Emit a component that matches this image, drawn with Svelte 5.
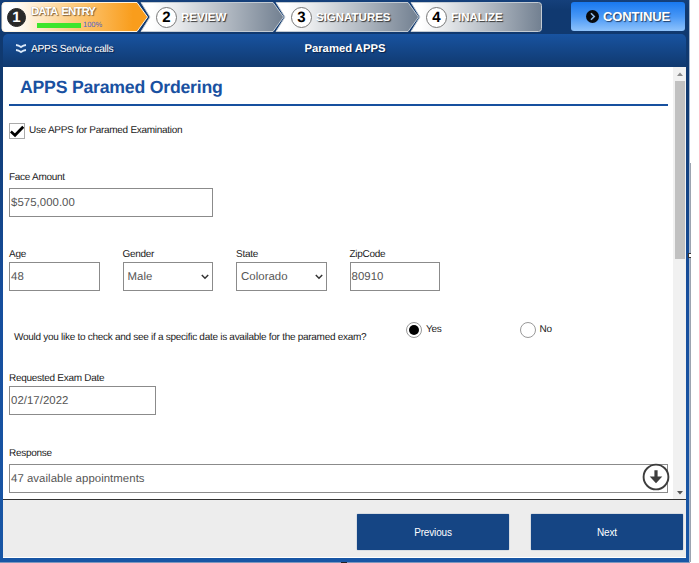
<script>
  const steps = [
    { n: 1, label: 'DATA ENTRY', width: 147, left: 0, shape: 'M4 .5H136L146.500 15L136 29.500H4Q1 29.500 1 26.500V3.500Q1 .5 4 .5Z', active: true },
    { n: 2, label: 'REVIEW', width: 145, left: -8, shape: 'M1 .5H133L143.500 15L133 29.500H1L10 15Z' },
    { n: 3, label: 'SIGNATURES', width: 145, left: -10, shape: 'M1 .5H133L143.500 15L133 29.500H1L10 15Z' },
    { n: 4, label: 'FINALIZE', width: 132, left: -10, shape: 'M1 .5H128.500Q131.500 .5 131.500 3.500V26.500Q131.500 29.500 128.500 29.500H1L10 15Z' },
  ];
  const person = [
    { label: 'Age', value: '48' },
    { label: 'Gender', value: 'Male', select: true },
    { label: 'State', value: 'Colorado', select: true },
    { label: 'ZipCode', value: '80910' },
  ];
</script>

<div class="page">
  <main class="window">
    <header class="top">
      {#each steps as step}
        <div class="step" class:active={step.active} style="width:{step.width}px;margin-left:{step.left}px">
          <svg class="shape" width={step.width} height="30">
            <defs>
              <linearGradient id="fill{step.n}">
                <stop offset="0.08" stop-color="#fff" />
                {#if step.active}
                  <stop offset="0.5" stop-color="#fdca7c" />
                  <stop offset="0.9" stop-color="#f99d1c" />
                {:else}
                  <stop offset="0.25" stop-color="#e9ebed" />
                  <stop offset="1" stop-color="#728091" />
                {/if}
              </linearGradient>
            </defs>
            <path d={step.shape} fill="url(#fill{step.n})" stroke={step.active ? '#fff3df' : '#c3cbd3'} />
          </svg>
          <span class="num">{step.n}</span>
          <div class="caption">
            <b>{step.label}</b>
            {#if step.active}
              <div class="progress"><i></i><span>100%</span></div>
            {/if}
          </div>
        </div>
      {/each}
      <button class="continue">
        <svg width="13" height="13" viewBox="0 0 12 12">
          <circle cx="6" cy="6" r="6" fill="#080a0d" />
          <path d="M4.600 3L7.600 6L4.600 9" fill="none" stroke="#8db9e8" stroke-width="1.500" />
        </svg>
        <b>CONTINUE</b>
      </button>
    </header>

    <nav class="bar">
      <div class="calls">
        <svg width="12" height="10" viewBox="0 0 12 10">
          <path d="M1 1Q3.500 1.200 6 3Q8.500 1.200 11 1M1 6Q3.500 6.200 6 8Q8.500 6.200 11 6" fill="none" stroke="#dbe9fa" stroke-width="1.900" />
        </svg>
        <span>APPS Service calls</span>
      </div>
      <b class="title">Paramed APPS</b>
    </nav>

    <section class="body">
      <div class="form">
        <h1>APPS Paramed Ordering</h1>
        <div class="use">
          <span class="check">
            <svg width="14" height="14" viewBox="0 0 14 14"><path d="M.8 7.500L5 11.300L13.200 2.800" fill="none" stroke="#000" stroke-width="2.700" /></svg>
          </span>
          <span class="t use-text">Use APPS for Paramed Examination</span>
        </div>
        <div class="field face">
          <span class="t">Face Amount</span>
          <div class="input">$575,000.00</div>
        </div>
        <div class="row">
          {#each person as f}
            <div class="field">
              <span class="t">{f.label}</span>
              <div class="input" class:select={f.select}>
                {f.value}
                {#if f.select}
                  <svg width="8" height="6" viewBox="0 0 8 6"><path d="M.8 1L4 4.200L7.200 1" fill="none" stroke="#333" stroke-width="1.500" /></svg>
                {/if}
              </div>
            </div>
          {/each}
        </div>
        <div class="question">
          <span class="t ask">Would you like to check and see if a specific date is available for the paramed exam?</span>
          <div class="radio"><span class="dot on"></span><span class="t">Yes</span></div>
          <div class="radio"><span class="dot"></span><span class="t">No</span></div>
        </div>
        <div class="field date">
          <span class="t">Requested Exam Date</span>
          <div class="input">02/17/2022</div>
        </div>
        <div class="field response">
          <span class="t">Response</span>
          <div class="input">
            47 available appointments
            <svg class="down" width="28" height="28" viewBox="0 0 28 28">
              <circle cx="14" cy="14" r="12.400" fill="#fff" stroke="#3d3d3d" stroke-width="1.900" />
              <path d="M12.400 7.300H15.600V13.500H20.300L14 20.200L7.700 13.500H12.400Z" fill="#3d3d3d" />
            </svg>
          </div>
        </div>
      </div>
      <div class="scroll">
        <svg width="6" height="4"><path d="M0 4L3 .5L6 4Z" fill="#8b8b8b" /></svg>
        <div class="thumb"></div>
        <svg width="6" height="4"><path d="M0 0L3 3.500L6 0Z" fill="#555" /></svg>
      </div>
    </section>

    <footer>
      <button>Previous</button>
      <button>Next</button>
    </footer>
    <i class="fragment"></i>
  </main>
  <div class="outside"><i></i><b></b></div>
</div>

<style>
  .page {
    display: flex;
    width: 699px;
    height: 563px;
    overflow: hidden;
    background: #fff;
    font-family: "Liberation Sans", Arial, sans-serif;
    text-rendering: geometricPrecision;
  }
  .window {
    position: relative;
    box-sizing: border-box;
    width: 690px;
    height: 563px;
    padding: 0 3px;
    display: flex;
    flex-direction: column;
    background: linear-gradient(#15407b 0, #103970 10px, #10396f 90px, #164e9d 300px, #1856a5);
    border-right: 1px solid #aab9ce;
    border-bottom: 1px solid #7d96bd;
  }
  .top {
    display: flex;
    height: 34px;
    box-sizing: border-box;
    padding-top: 2px;
    margin-left: -2px;
    flex: none;
  }
  .step {
    position: relative;
    height: 30px;
    display: flex;
    align-items: center;
    flex: none;
  }
  .shape { position: absolute; left: 0; top: 0; }
  .num {
    position: relative;
    box-sizing: border-box;
    width: 21px;
    height: 21px;
    margin-left: 16px;
    border: 1.500px solid #777;
    border-radius: 50%;
    background: #fff;
    color: #000;
    font: bold 15px/19px "Liberation Sans", sans-serif;
    text-align: center;
  }
  .active .num {
    width: 19px;
    height: 19px;
    margin-left: 6px;
    border-color: #292929;
    background: #292929;
    color: #fff;
    line-height: 17px;
  }
  .caption { position: relative; margin-left: 4px; }
  .caption b {
    display: block;
    margin-top: 2px;
    color: #fff;
    font-size: 11.500px;
    line-height: 13px;
    letter-spacing: 0;
    text-shadow: 1px 1px 1px #333;
    white-space: nowrap;
  }
  .active .caption { margin-left: 5px; }
  .active .caption b {
    margin-top: -1px;
    font-size: 11.500px;
    letter-spacing: -.95px;
    word-spacing: 2px;
    text-shadow: 1px 1px 1px #85643a, 0 0 1px #9a7a50;
  }
  .progress { display: flex; align-items: center; height: 8px; margin: 2px 0 -2px 6px; }
  .progress i { width: 44px; height: 5px; background: #3de52c; }
  .progress span { margin-left: 2px; font-size: 7.500px; line-height: 8px; color: #5265c7; }
  .continue {
    width: 114px;
    height: 29px;
    margin-left: 29px;
    padding: 0;
    border: 0;
    border-radius: 3px;
    display: flex;
    align-items: center;
    justify-content: center;
    gap: 4px;
    background: linear-gradient(#1878ef, #4897f6 50%, #8fc3fb);
    color: #fff;
    font: 13px "Liberation Sans", sans-serif;
    flex: none;
  }
  .continue b { text-shadow: 1px 1px 1px #233e65; letter-spacing: -.1px; }
  .bar {
    display: grid;
    grid-template-columns: 1fr auto 1fr;
    align-items: center;
    height: 33px;
    flex: none;
    box-sizing: border-box;
    padding: 0 11px 3px 12px;
    border-radius: 5px 5px 0 0;
    background: linear-gradient(#1853a0, #10396f);
    color: #fff;
    font-size: 10.300px;
    text-shadow: 1px 1px 1px #0a2146;
  }
  .calls { display: flex; align-items: center; gap: 4px; letter-spacing: -.32px; }
  .title { font-size: 11.300px; }
  .body {
    display: flex;
    height: 433px;
    box-sizing: border-box;
    flex: none;
    background: #fff;
    border-bottom: 1px solid #333;
  }
  .form { width: 659px; margin-left: 6px; display: flex; flex-direction: column; }
  h1 {
    box-sizing: border-box;
    height: 39px;
    margin: 0;
    padding: 8px 0 0 11px;
    border-bottom: 2px solid #17509f;
    color: #1951a1;
    font-size: 17.700px;
    letter-spacing: -.23px;
    line-height: 24px;
  }
  .t { font-size: 10px; line-height: 12px; color: #222; white-space: nowrap; letter-spacing: -.28px; }
  .use { display: flex; align-items: center; margin-top: 16px; height: 17px; }
  .check {
    box-sizing: border-box;
    width: 16px;
    height: 16px;
    border: 1px solid #aaa;
    display: flex;
  }
  .use-text { margin-left: 4px; }
  .field { display: flex; flex-direction: column; width: 90.500px; gap: 1px; }
  .input {
    position: relative;
    box-sizing: border-box;
    height: 29px;
    padding: 0 1px;
    border: 1px solid #8b8b8b;
    display: flex;
    align-items: center;
    justify-content: space-between;
    color: #555;
    font-size: 11.400px;
    letter-spacing: .05px;
  }
  .select { padding: 0 3px 0 4px; }
  .face { width: 204px; margin-top: 33px; gap: 4px; }
  .row { display: flex; gap: 23px; margin-top: 32px; }
  .question { display: flex; height: 22px; margin-top: 31px; }
  .ask { width: 392px; margin-left: 5px; padding-top: 10px; flex: none; box-sizing: border-box; }
  .radio { display: flex; align-items: center; width: 113.500px; height: 16px; gap: 4px; }
  .dot { box-sizing: border-box; width: 16px; height: 16px; border: 1px solid #999; border-radius: 50%; background: #fff; }
  .on { background: #000; background-clip: content-box; padding: 2px; }
  .date { width: 147px; margin-top: 29px; gap: 1px; }
  .response { width: 659px; margin-top: 33px; gap: 4px; }
  .down { position: absolute; right: -3px; top: -2px; }
  .scroll {
    width: 13px;
    margin-left: 5px;
    padding: 5px 0 4px;
    box-sizing: border-box;
    display: flex;
    flex-direction: column;
    align-items: center;
    background: #f1f1f1;
  }
  .thumb { width: 10px; height: 178px; margin: 5px 0 auto; background: #c1c1c1; }
  footer {
    height: 58px;
    flex: none;
    box-sizing: border-box;
    display: flex;
    justify-content: flex-end;
    align-items: flex-start;
    gap: 22px;
    padding: 14px 3px 0 0;
    background: #ededed;
    border-bottom: 1px solid #fff;
  }
  footer button {
    width: 152px;
    height: 36px;
    padding: 0;
    border: 0;
    border-radius: 1px;
    background: #154584;
    color: #fff;
    font: 10px "Liberation Sans", sans-serif;
    letter-spacing: -.15px;
    box-shadow: 0 0 1px #154584;
  }
  .fragment { position: absolute; left: 341px; bottom: -1px; width: 6px; height: 1px; background: #222; }
  .outside { position: relative; width: 9px; padding-top: 163px; }
  .outside i { display: block; width: 1px; height: 399px; background: #9ba4b0; }
  .outside b {
    position: absolute;
    left: -2px;
    top: 253px;
    box-sizing: border-box;
    width: 3px;
    height: 5px;
    border: solid #333;
    border-width: 1px 0 1px 1px;
    background: #fff;
  }
</style>
